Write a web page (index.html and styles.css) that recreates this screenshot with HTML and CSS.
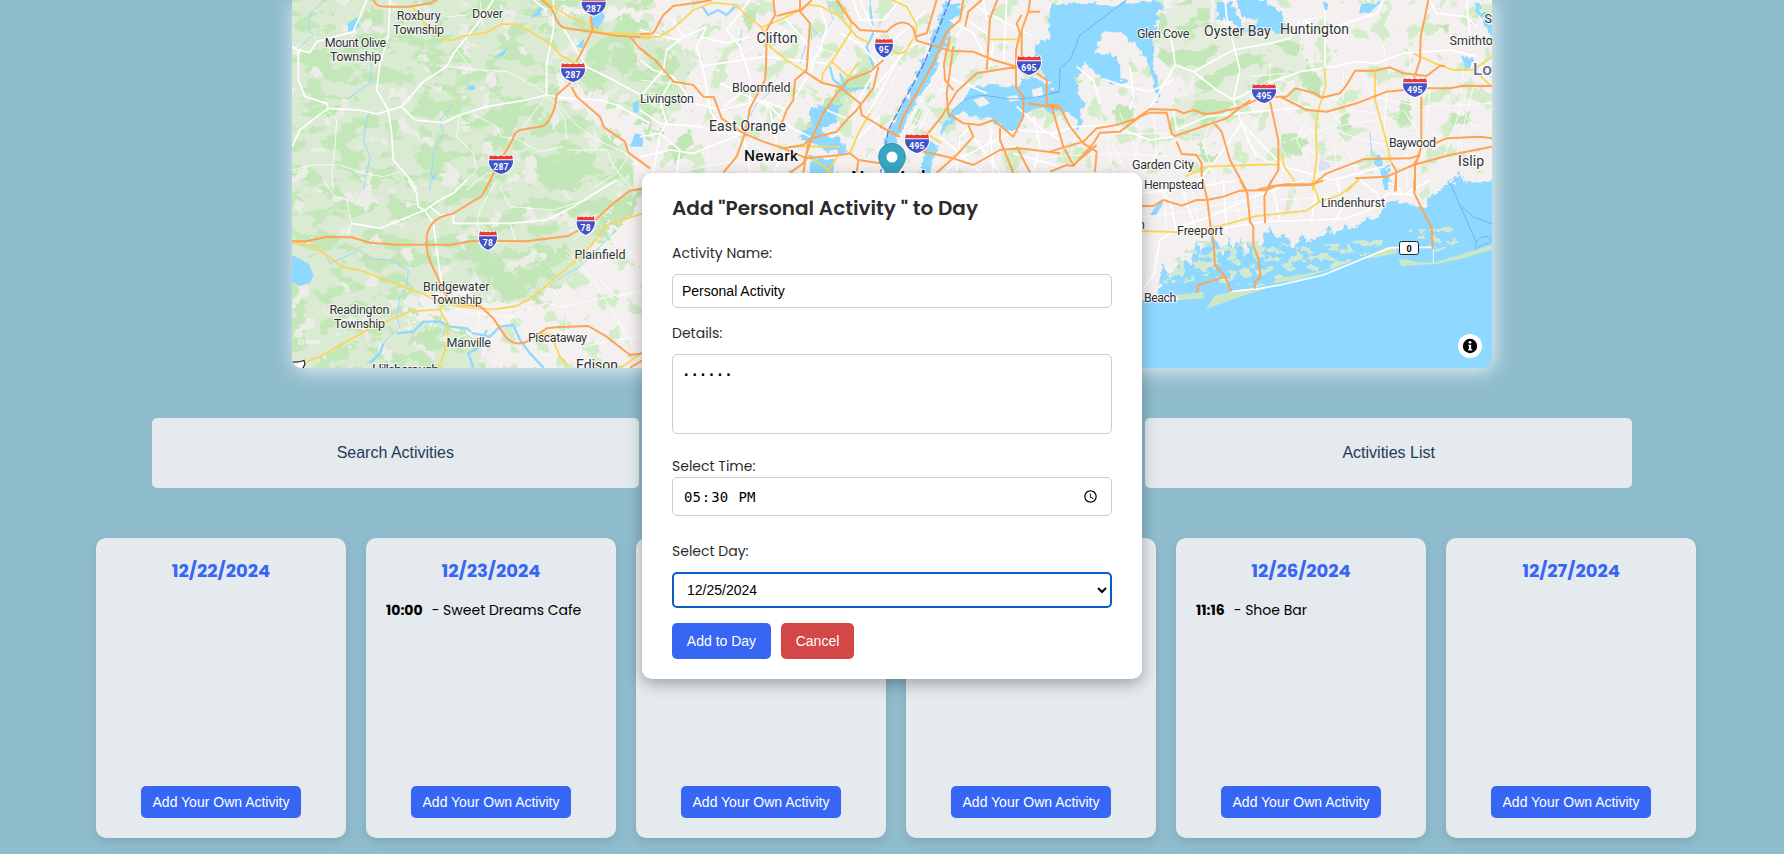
FILE: index.html
```html
<!DOCTYPE html>
<html lang="en">
<head>
<meta charset="utf-8">
<title>Trip Planner</title>
<link rel="stylesheet" href="styles.css">
</head>
<body>
<main class="page">
  <section class="map">
    <svg class="map-canvas" viewBox="292 0 1200 368" width="1200" height="368">
      <defs>
        <filter id="woods" x="0" y="0" width="1" height="1" color-interpolation-filters="sRGB">
          <feTurbulence type="fractalNoise" baseFrequency="0.012 0.02" numOctaves="5" seed="8"/>
          <feColorMatrix values="0 0 0 0 .765  0 0 0 0 .905  0 0 0 0 .72  22 0 0 0 -11.4"/>
          <feComposite in2="SourceAlpha" operator="in"/>
        </filter>
        <filter id="town" x="0" y="0" width="1" height="1" color-interpolation-filters="sRGB">
          <feTurbulence type="fractalNoise" baseFrequency="0.016" numOctaves="5" seed="31"/>
          <feColorMatrix values="0 0 0 0 .93  0 0 0 0 .93  0 0 0 0 .91  22 0 0 0 -14"/>
          <feComposite in2="SourceAlpha" operator="in"/>
        </filter>
        <filter id="parks" x="0" y="0" width="1" height="1" color-interpolation-filters="sRGB">
          <feTurbulence type="fractalNoise" baseFrequency="0.016" numOctaves="5" seed="5"/>
          <feColorMatrix values="0 0 0 0 .83  0 0 0 0 .925  0 0 0 0 .79  24 0 0 0 -14.6"/>
          <feComposite in2="SourceAlpha" operator="in"/>
        </filter>
        <filter id="marsh" x="0" y="0" width="1" height="1" color-interpolation-filters="sRGB">
          <feTurbulence type="fractalNoise" baseFrequency="0.03 0.045" numOctaves="3" seed="12"/>
          <feColorMatrix values="0 0 0 0 .82  0 0 0 0 .91  0 0 0 0 .82  30 0 0 0 -16"/>
          <feComposite in2="SourceAlpha" operator="in"/>
        </filter>
        <filter id="shore" x="-.05" y="-.05" width="1.1" height="1.1">
          <feTurbulence type="fractalNoise" baseFrequency="0.04" numOctaves="3" seed="3"/>
          <feDisplacementMap in="SourceGraphic" scale="34" xChannelSelector="R" yChannelSelector="G"/>
        </filter>
        <filter id="edge" x="-.1" y="-.1" width="1.2" height="1.2">
          <feTurbulence type="fractalNoise" baseFrequency="0.03" numOctaves="4" seed="9"/>
          <feDisplacementMap in="SourceGraphic" scale="90" xChannelSelector="R" yChannelSelector="G"/>
        </filter>
        <g id="shield3">
          <path fill="#fff" d="M-13-5 -11.5-10Q-6-7 0-9.500Q6-7 11.500-10L13-5C14 3 8 9 0 11C-8 9-14 3-13-5Z"/>
          <path fill="#ea3a38" d="M-12-4.800 -11-9Q-8.500-7.200-6-8.500Q-3-7 0-8.800Q3-7 6-8.500Q8.500-7.200 11-9L12-4.800Z"/>
          <path fill="#4153c6" d="M-12-3.700H12C12.600 3 7 8.500 0 10C-7 8.500-12.600 3-12-3.700Z"/>
        </g>
        <g id="shield2">
          <path fill="#fff" d="M-10-5-8.500-10Q-4-7 0-9.500Q4-7 8.500-10L10-5C11 3 6 9 0 11C-6 9-11 3-10-5Z"/>
          <path fill="#ea3a38" d="M-9-4.800-8-9Q-6-7.200-4-8.500Q-2-7 0-8.800Q2-7 4-8.500Q6-7.200 8-9L9-4.800Z"/>
          <path fill="#4153c6" d="M-9-3.700H9C9.600 3 5 8 0 10C-5 8-9.600 3-9-3.700Z"/>
        </g>
      </defs>
      <rect class="land" x="292" width="1200" height="368"/>

      <g transform="scale(.33333)">
        <path class="green" d="M870 0H1960L2000 90 2080 180 2190 230 2150 330 1970 420 1900 440V1110H870Z"/>
        <path filter="url(#woods)" d="M870 0H1960L2000 90 2130 210 2210 230 2150 330 1970 420 1900 440V1110H870Z"/>
        <path filter="url(#town)" d="M870 0H2100V1110H870Z"/>
        <path class="land" filter="url(#edge)" d="M1680 20H2600V520H1920L1870 430 1740 330 1660 300 1680 230 1850 330 1930 370 1960 430 2030 300 2090 170 1960 60 1700 50Z"/>
        <path class="land" filter="url(#edge)" d="M1230 950 1260 890 1400 880 1560 930 1700 850 1800 720 1930 600V1110H1500L1410 1000 1330 970 1200 960Z"/>
        <path filter="url(#parks)" d="M1930 0H4476V520H1930ZM1300 900 1930 700V1110H1300Z"/>
        <path class="greenlite" filter="url(#edge)" d="M3480 40 3560 0H3630V80L3720 90 3750 70 3840 60 3900 100 3940 230 3830 260 3690 320 3620 410 3510 400V340L3580 260 3470 170Z"/>
        <path filter="url(#woods)" d="M3480 40 3560 0H3630V80L3720 90 3750 70 3840 60 3900 100 3940 230 3830 260 3690 320 3620 410 3510 400V340L3580 260 3470 170Z"/>
      </g>

      <g transform="translate(280 0) scale(.33333)">
        <path class="wood" filter="url(#shore)" d="M755 455 820 480 950 450 935 510 880 570H800L770 510ZM1000 145 1065 130 1075 210 1030 230 990 190ZM540 380 700 300 730 330 690 410 650 380Z"/>
        <path class="water" d="M203 70 235 50 237 80 205 102ZM750 55 790 10 780 45ZM642 172 685 142 670 168ZM560 258 585 256 585 270H565ZM888 140 913 115 908 145ZM930 60 960 25 975 50 950 92ZM1058 310 1075 300 1076 340 1060 335ZM1050 440 1065 400 1090 405 1088 440ZM455 530 470 520 460 545Z"/>
        <path class="creek" d="M135 0 90 40 85 90 100 105 50 150M275 190 270 250 205 295M265 340 250 420 270 470 250 570M520 310 480 360 490 400 460 460 450 570"/>
        <path class="minor" d="M36 140 55 150 55 240 75 290 140 310 145 325 240 330 290 342 365 320 400 280 430 245 500 200 520 160 590 75 640 0M145 325 110 350 60 390 36 440M55 150 90 158 110 125 220 95 260 0M330 0 325 110 300 190 290 270 325 330 335 400 340 480 400 550 410 570M365 320 405 360 490 368 540 345 620 320 740 300 800 285M820 0 820 90 800 190 800 285 860 295 960 300 1010 315 1110 370M760 0 800 30M850 85 920 200 1000 240 1110 300"/>
        <path class="street" d="M470 195 600 210 680 215 770 260 800 285 720 395 690 415M540 345 530 410 580 460 590 510 530 570M36 510 100 495H180L250 520 310 530 360 515M135 325 170 360 165 440 155 520 160 570M575 340 650 380 665 410 705 415 780 455 850 440M800 290 850 330 890 375 950 420 1040 460 1080 500 1110 540M820 305 855 360 860 420M930 570 1010 520 1045 470M500 50 560 45 590 20M500 200 530 150 570 200M600 0 610 80M860 450 980 450 1000 500 1060 570M560 570 620 520 670 515"/>
      </g>
      <g transform="translate(280 180) scale(.33333)">
        <path class="wood" filter="url(#edge)" d="M520 195 600 190 640 220 700 280 790 240 850 200 870 210 790 300 720 350 650 350 640 300 590 270 560 230ZM930 150 1040 50 1080 20V60L960 180ZM390 470 440 440 490 450 470 480 420 500Z"/>
        <path class="water" d="M36 225 85 250 100 285 90 310 60 318 36 305Z"/>
        <path class="creek" d="M140 230 150 250 240 210 260 235 330 240 350 250 385 270 380 320 360 350 350 410 360 440 340 460 310 490 300 520 260 550M820 310 860 280 900 260 1010 150"/>
        <path class="river" d="M350 460 400 455 430 425 480 425 510 440 560 445 580 460 630 470 660 440 700 435 720 480 750 520 790 563M580 563 565 520 600 500 620 450M310 490 300 520 270 550"/>
        <path class="minor" d="M215 130 300 145 435 90 480 60 520 40 560 0M385 0 410 40 415 80 435 92 460 130 480 280 490 340M450 80 480 105 520 105V130L590 130M590 130 690 130 800 120 880 80 960 30 1010 0"/>
        <path class="street" d="M130 0 165 50 200 60 215 130 205 165M590 130 600 90 650 0M660 20 690 80 820 90 920 60M590 130 610 180M690 130 705 180 740 185M860 210 940 300 1000 400 1060 500M880 180 960 120M740 390 800 370 850 380 940 360 1086 330M500 380 580 400 700 410 740 450 760 500 820 530M820 330 860 390 860 470M960 300 1010 350 1060 340M700 410 640 440M910 500 1000 480 1086 470M600 400 590 450 520 480M1010 160 1086 260M930 260 1040 210"/>
      </g>

      <g transform="translate(640 0) scale(.33333)">
        <path class="wood" filter="url(#shore)" d="M60 185 110 160 120 200 70 260ZM90 440 150 390 165 420 110 500ZM500 370 560 300 640 220 700 190 690 250 600 300 540 390 520 450ZM310 50 350 20 340 80 320 100ZM560 10 600 0 625 30 600 50Z"/>
        <g class="water" filter="url(#shore)">
          <path d="M915 10 960 10 940 80 900 160 885 215 835 300 785 380 762 440 755 560H730L738 410 755 380 805 280 865 140ZM510 325 560 320 600 310 590 360 545 395 600 420 620 460 560 450 510 430 480 420 490 390 520 390ZM510 470 580 480 590 560H520ZM905 370 960 310 1000 265 1040 250 1110 265 1150 240 1200 240 1240 260 1300 240V345L1230 335 1190 320 1150 345 1130 400 1090 385 1060 350 1020 360 985 340 950 340 900 410ZM1300 10 1250 40 1240 80 1215 130 1180 120 1185 180 1220 230 1240 270 1300 300ZM860 420 890 430 860 560H835Z"/>
        </g>
        <path class="land" d="M1000 300 1030 290 1050 310 1020 322ZM1100 290 1130 285 1140 300 1110 305ZM1175 270 1205 260 1210 285 1180 295Z"/>
        <path class="wood" d="M815 370 835 325 850 330 830 375ZM850 310 865 285 875 292 862 315Z"/>
        <path class="river" d="M187 20 205 45 235 30 260 45 285 20M600 220 620 270 580 240 570 200M690 20 700 100 680 140 700 200M600 270 690 262"/>
        <path class="creek" d="M560 0 580 60 540 110 510 80 515 120M305 90 300 130M410 260 350 310 330 350M690 0 695 60M500 130 480 190"/>
        <path class="minor" d="M0 180 40 210 100 230 160 310 250 330 360 300 440 330M0 330 60 370 180 380 240 400 310 400M0 410 60 400 120 450 110 518M100 60 130 110 80 150 70 210 0 290M200 80 170 140 190 210 210 330 240 380M180 110 260 130 330 110M330 0 260 90 300 140 330 230 330 330M430 50 500 130 520 200 460 300M0 90 110 120 200 80M40 518 60 400 80 370 60 300 100 230M440 90 370 150M540 20 560 80 540 150 500 210M640 0 660 60 730 60 780 0M180 200 370 170 560 190M600 100 660 130 710 190M240 250 390 320 450 380 510 410M330 260 250 320M160 460 310 400 330 518M390 330 410 430M440 440 400 518M630 360 560 330M640 330 750 130 860 30M680 350 790 150 830 130M660 0 710 110M700 270 790 160M650 420 720 350M910 518 970 470 1050 430 1130 390 1260 400M950 518 960 410 990 380M1000 410 1080 518M1010 20 1100 70 1180 110M1040 100 980 60 950 110M1060 130 1050 200M930 60 1000 100 1040 180M920 230 1040 280M900 410 980 480 1020 518M1050 370 1060 518M1120 460 1260 500M1180 350 1200 440 1180 518M1130 320 1210 390 1260 420M1040 60 1030 0M1100 0 1090 200M0 470 90 450 160 460"/>
        <path class="street" d="M780 410 940 130M800 410 955 130M820 420 965 150M790 400 850 420M810 350 870 380M835 300 895 325M860 250 920 275M885 200 930 220M750 170 790 185 700 350 720 400M20 20 150 90M0 240 180 260M310 420 480 518M350 340 420 430 500 470M200 430 210 518M100 518 300 480M460 120 620 170M280 180 460 60M580 60 500 230M920 300 990 250M1140 410 1230 518M990 420 1260 460M1060 390 1020 518M1160 440 1250 360"/>
      </g>

      <g transform="translate(1050 0) scale(.33333)">
        <g class="water" filter="url(#shore)">
          <path d="M10 10H345L320 60 305 110 325 260 335 290 315 300 300 200 255 130 195 90 150 105 135 160 200 170 215 220 225 250 190 255 140 220 100 190 75 260 100 310 90 390 60 340 45 320 15 310V260L10 220 10 160 0 150V40ZM500 10H550L560 60 590 90 610 85 630 20 680 20 700 50 705 90 680 100 640 80 620 100 560 90 545 60 525 50 500 60ZM560 0H650V50L580 60ZM820 10H840L825 40ZM930 10 990 8 960 35 930 30ZM1270 10 1290 20 1320 60 1340 110 1310 100 1300 50ZM1235 170 1270 168 1260 205H1245Z"/>
          <path d="M1170 580 1200 540 1205 560 1230 520 1250 550 1300 560 1345 530V600H1170ZM995 510 1020 500 1018 570H1000ZM970 460 985 455 1000 500 985 510Z"/>
        </g>
        <path class="wood" filter="url(#shore)" d="M185 330 210 310 250 325 245 370 200 365ZM690 400 740 405 775 430 750 460 710 465ZM445 430 460 440 470 465 510 460V480L460 485ZM1050 310 1080 300V370L1045 375ZM755 230 800 220 820 260 800 290 760 260ZM870 350 900 345 900 390 870 400ZM1160 80 1200 70 1190 100ZM1200 345 1260 340 1260 370 1210 370ZM75 230 100 235 90 255ZM190 370 240 370 230 385Z"/>
        <path class="lilac" d="M805 500 815 465 845 500 810 515Z"/>
        <path class="creek" d="M960 395 965 460 1000 520 1005 570"/>
        <path class="ferry" d="M230 0 90 105 60 180 30 205 28 275 0 278"/>
        <path class="minor" d="M0 400 80 380 180 375 300 420 370 410M370 150 375 195 430 215 550 150 660 130 720 115 750 60M375 195 320 290 300 320M430 215 500 270 550 300 640 255 750 215 850 200 920 185 980 190 1060 160 1200 150 1280 170M550 300 575 370 600 430 620 470M525 0 530 50 555 150 570 210 550 300M825 30V205M1000 0 980 40 820 90 760 60M1140 0 1160 40 1250 50 1280 80M1250 0 1260 120M370 150 360 110 310 100M170 240 230 260 300 275M240 200 250 290 240 330M300 275 370 240M80 200 130 240 150 310M370 330 380 390 470 350 620 335M575 370 700 500 850 540 1000 500M575 370 490 490 430 560M620 335 780 320"/>
        <path class="street" d="M640 260 700 300 720 350 800 400M825 290 880 400 980 430 1100 440M850 430 870 560M930 210 970 290 1110 320M1110 320 1326 310M1240 210 1230 330 1180 480M1130 440 1090 520M720 420 850 380 1030 350M760 440 820 480 930 500M1200 280 1270 380 1326 360M250 330 270 420 240 518M150 340 180 420 230 518M60 420 200 400 370 400M100 440 150 518M480 360 460 430 500 560M620 470 700 500 690 560M750 160 760 60 820 50M1060 330 1120 420M880 210 880 300M1000 130 1010 210M1080 120V210M170 410 190 518M210 340 290 518M310 340 320 470M350 420 280 518M0 470 200 460 370 470M640 330 590 420 660 500M780 340 740 420 780 500M850 290 900 330 980 340M1140 270 1130 390 1200 440M880 420 940 560M800 520 950 490M1010 280 1000 420M1270 260 1220 460M660 190V300M600 230 700 220M1070 460V560"/>
      </g>

      <g transform="translate(1130 180) scale(.33333)">
        <path class="green" d="M480 20 500 30 480 90 460 110ZM865 45 895 15 900 40 880 60Z"/>
        <path class="water" filter="url(#shore)" d="M10 360 65 352 90 330 95 250 120 290 140 260 165 240 180 250 200 180 215 230 240 170 265 185 280 230 300 170 315 215 330 175 345 230 360 180 380 210 420 145 440 175 470 165 480 200 500 190 515 160 540 190 560 170 600 145 615 165 650 140 690 140 710 110 745 120 765 70 800 65 880 80 900 50 940 20 970 10 1150 5V590H0Z"/>
        <path class="ocean" d="M36 367 230 375 340 350 800 225 1086 250V563H36Z"/>
        <path filter="url(#marsh)" d="M100 270 200 180 300 190 400 180 530 200 700 180 770 180V200L600 270 430 310 380 320 280 310 200 300 160 310 100 310ZM830 150 960 140 1000 180 910 220 880 190Z"/>
        <path class="water" d="M60 105 90 60 100 70 75 110Z"/>
        <path class="sand" d="M228 388 255 345 380 325 420 322 330 350ZM430 310 440 295 540 280 620 262 500 300ZM690 238 770 202 800 205V220L740 232ZM805 240 825 238 870 248 915 247 1086 195V208L1000 235 920 252 815 258ZM140 345 220 335V355L150 360Z"/>
        <path class="land" d="M36 342 140 345 150 360H36Z"/>
        <path class="ferry" d="M980 0 962 12 1040 190M995 80 1030 110 1086 132M1040 210C1030 180 1060 160 1080 175C1100 190 1050 190 1045 205"/>
        <path class="minor" d="M36 330 70 290 90 180 150 140 240 110 370 50 520 0M60 0 120 60 140 155M150 0 170 70 200 150M36 40 200 20 330 0M280 0 290 160M250 150 400 125 560 120 650 115 740 80 770 40 850 45M430 30 450 120M560 20 545 120M620 0 640 80 610 130M690 0 740 40 760 80M790 10 820 45 900 0M300 335 390 325 450 315 580 285 780 203 905 202"/>
        <path class="street" d="M910 205V250M36 110 140 100 340 60M100 20 110 150M180 0 210 150M310 20 330 130M380 20 370 110M450 60 600 50M480 20 520 120M240 100 400 80"/>
      </g>

      <g class="highways">
        <g transform="translate(280 0) scale(.33333)">
          <path class="yellow" d="M395 18 430 65 470 105Q500 125 520 120L545 110 620 97 665 72 715 74 810 130 840 165 890 190M790 0 860 45 930 80 970 98 1110 104"/>
          <path class="orange" d="M278-5C290 22 300 20 330 20H385L450 10 470-2M780-5 815 25 830 60Q840 82 860 85L935 95 1010 107 1110 113M945-5 932 50 938 90 890 185M872 248 830 285 825 320Q810 365 790 378L720 390Q700 400 700 415L680 450 660 480 615 572M875 262 890 290 960 350 972 382 1035 425 1045 458 1110 505M1050 110 1075 140 1110 170"/>
        </g>
        <g transform="translate(280 180) scale(.33333)">
          <path class="yellow" d="M36 188 100 198 190 262 240 270 380 325 430 342 480 365 540 380 640 388 710 378 760 350 860 265 930 200 980 135 1020 122 1090 100M80 545 120 530 190 490 280 440 390 395 480 388 490 370M480 390 505 435 500 500 475 563M780 460 820 465 825 495 840 530 865 560M1020 565 1090 515"/>
          <path class="orange" d="M36 184 80 184 140 170 215 172 270 188 350 194 515 194 570 184 620 182 740 184 865 168 940 125 1000 70 1050 32 1090 25M634-4 605 48 515 103Q455 110 440 165V205Q445 240 470 285L490 335 520 370 600 378 640 415 680 475Q710 500 740 485L800 445 830 442 925 438 980 470 1050 525 1090 520M1050 563 1090 540"/>
        </g>
        <g transform="translate(640 0) scale(.33333)">
          <path class="yellow" d="M0 113 60 110 100 85 160 30 215 8 285 14 330 55 365 82 430 55 470 35 500 14 540 18 600 50 650 110 690 130M365 82 390 140 440 180 495 215M610 20 632 60V95L575 185 548 220 546 245M575 185 625 230M655 187 625 230M755 150Q780 170 800 150L820 115M755 0 800 20 830 75 825 110M1050 118H1140M690 340 655 400 630 460M560 518 595 465M450 440 600 440M850 395 905 430M500 470 540 490 575 518"/>
          <path class="orange" d="M0 103 40 100 70 45 100 18 170 8 215 0M0 145 45 180 75 215 100 245 160 255 190 290 222 292 245 355 310 400 370 425 430 445 490 435 515 415 590 395 620 360 650 330 700 265 715 200M400 0 405 45 380 90 378 200 375 240 330 325 315 400 290 470 250 518M480 0 480 30 410 48M515 0 480 35 510 70 500 210 465 240 460 300 440 330 425 370M495 215 545 248 600 262 660 310 665 345 775 410M730 180 690 215 625 240 590 280 550 340 515 415 490 490 450 518M430 445 500 475 600 465 630 460 655 480 720 490M655 480 650 518M590 0 630 60 660 90 740 95 750 85Q790 50 820 85L830 122 930 152 1000 155 1060 180 1130 200 1010 220 950 275 905 350 860 405M890 0 860 100 825 110M970 0 960 60 920 95 880 190 790 350 775 390M930 110 912 190 915 240 940 270M940 140 920 280 925 340 970 370 1020 375 1060 360 1120 410 1150 350 1150 290 1128 260 1128 150 1140 100 1130 70 1145 45M1025 0 985 35 975 80M1072 0 1050 55 1040 210M1170 0 1165 35 1145 90 1145 190M1190 220 1220 240V310L1260 325M1165 310 1260 325M985 375 1000 410 950 465 890 518M830 450 940 475 1000 495 1080 450 1140 445 1260 460M1080 385 1080 420 1120 518M1130 440 1170 518M1165 35H1200M720 380 780 410M505 430 490 518"/>
          <path class="boundary" d="M930 0 890 100 850 195 745 390 722 518"/>
          <path class="tunnel" d="M925 350Q980 270 1060 290T1260 275"/>
        </g>
        <g transform="translate(1050 0) scale(.33333)">
          <path class="yellow" d="M823 202 827 260 805 330 798 380 800 470 788 572M975 215V300L1000 390 1025 490M1090 160 1150 188 1210 210H1270L1326 170M1270 210 1326 260M405 530 470 500 600 495 690 493M697 460 700 495 735 545M890 575 930 535"/>
          <path class="orange" d="M0 455 100 425 140 385 200 375 260 355 300 327 380 330 400 340 430 330 465 342 500 338 570 322 640 290 710 290 735 265 790 278 815 293 870 280 890 255 915 212 975 212 1020 202 1060 220 1130 228 1170 197 1185 198M0 515 50 495 70 498 130 430 150 398 210 395 270 350 300 338H350L365 400 375 408 470 375 530 355 600 300M650 248V262M690 290 770 330 830 335 920 310 1010 275 1110 265 1200 265 1240 257 1326 258M660 305 685 420V510L655 560 710 553H790L830 520 940 478 1080 475 1110 465M1150 432 1190 415 1290 410 1326 415M490 367 515 395 540 480 590 572M380 425 395 462 440 465 455 490V530M0 315Q30 310 40 340L60 380 100 430 140 455 135 515M5 320 40 440 70 495 140 435M1135 0 1125 50 1112 110 1110 180 1092 235M1114 290V440L1095 500V572M1110 465 1090 495 1200 465 1326 440M1025 490 1038 510V572M620 570 660 560M915 535 1010 530 1090 495"/>
        </g>
        <g transform="translate(1130 180) scale(.33333)">
          <path class="yellow" d="M36 153 140 156 250 143 380 108 530 92 568 65 630 45 685 0M568 65 550 10 545 0"/>
          <path class="orange" d="M36 78 70 78 100 60 155 77 200 60H230L280 50 330 32 410 30 440 17 540 15 580 2M218 0 232 60 243 150 250 180 255 255 285 290 305 335M285 290 205 315 200 338M330 0 352 40 360 125 370 140V195L385 235 392 290 375 305V326M425 0 403 50 405 130M797 0 795 35M853 0V40L905 145 908 207"/>
        </g>
      </g>

      <g class="labels">
        <text x="396.700" y="19.500" textLength="44">Roxbury</text><text x="393" y="33.500" textLength="51">Township</text>
        <text x="472" y="17.500" textLength="31">Dover</text>
        <text x="324.700" y="47" textLength="61.500">Mount Olive</text><text x="330" y="61" textLength="51">Township</text>
        <text x="640" y="102.500" textLength="54">Livingston</text>
        <text x="574.500" y="258.500" textLength="51">Plainfield</text>
        <text x="423" y="290.500" textLength="66.500">Bridgewater</text><text x="431" y="304" textLength="51">Township</text>
        <text x="329.500" y="314" textLength="60">Readington</text><text x="334" y="328" textLength="51">Township</text>
        <text x="446.500" y="347" textLength="44.500">Manville</text>
        <text x="528" y="342" textLength="59">Piscataway</text>
        <text class="mid" x="372" y="375" textLength="67">Hillsborough</text>
        <text class="mid" x="576" y="370" textLength="42">Edison</text>
        <text class="mid" x="756.500" y="43" textLength="41">Clifton</text>
        <text x="732" y="92" textLength="58.500">Bloomfield</text>
        <text class="mid" x="709" y="130.500" textLength="77">East Orange</text>
        <text class="big" x="744" y="161" textLength="54">Newark</text>
        <text class="huge" x="851" y="184" textLength="80">New York</text>
        <text x="1137" y="38" textLength="52.500">Glen Cove</text>
        <text class="mid" x="1204" y="35.500" textLength="66.500">Oyster Bay</text>
        <text class="mid" x="1280" y="33.500" textLength="69">Huntington</text>
        <text x="1484.500" y="22.500">St. James</text>
        <text x="1449.500" y="45">Smithtown</text>
        <text class="region" x="1473" y="75">Long Island</text>
        <text x="1389" y="146.500" textLength="47">Baywood</text>
        <text class="mid" x="1458" y="166" textLength="26">Islip</text>
        <text x="1132" y="169" textLength="62">Garden City</text>
        <text x="1144" y="188.500" textLength="60">Hempstead</text>
        <text x="1321" y="207" textLength="64">Lindenhurst</text>
        <text x="1177" y="235" textLength="46">Freeport</text>
        <text x="1113" y="229" textLength="32">Lawn</text>
        <text x="1144" y="301.500" textLength="32.500">Beach</text>
      </g>
      <g class="shield-text">
        <use href="#shield3" x="593.700" y="5.500"/><text x="593.700" y="12">287</text>
        <use href="#shield3" x="573" y="72"/><text x="573" y="77.500">287</text>
        <use href="#shield3" x="501" y="164"/><text x="501" y="169.500">287</text>
        <use href="#shield2" x="488" y="240"/><text x="488" y="245.500">78</text>
        <use href="#shield2" x="585.700" y="225"/><text x="585.700" y="230.500">78</text>
        <use href="#shield2" x="884" y="47.500"/><text x="884" y="52.500">95</text>
        <use href="#shield3" x="1029" y="65"/><text x="1029" y="70.500">695</text>
        <use href="#shield3" x="917" y="143"/><text x="917" y="148.500">495</text>
        <use href="#shield3" x="1264" y="93"/><text x="1264" y="98.500">495</text>
        <use href="#shield3" x="1415" y="87"/><text x="1415" y="92.500">495</text>
      </g>
      <rect x="1399.500" y="241.500" width="19" height="13" rx="2" fill="#fff" stroke="#23272f"/>
      <text class="route" x="1409" y="251.500">0</text>
      <path d="M290 361.500Q297 363 304 360.500L305 364 302 370H290" fill="#fff" stroke="#222" stroke-width="1.200"/>
      <g fill="none" stroke="#fff" opacity=".85"><circle cx="301" cy="342" r="2.300"/><path d="M305 342H320" stroke-width="3"/><path d="M305 342H320" stroke="#ccc" stroke-dasharray="1.500 1"/></g>
      <path d="M892 143.500C899.500 143.500 905.300 149.500 905.300 157C905.300 166 897 171 892 182C887 171 878.700 166 878.700 157C878.700 149.500 884.500 143.500 892 143.500Z" fill="#38a5c2" stroke="#348fa8"/>
      <circle cx="892" cy="157" r="5.500" fill="#fff"/>
      <circle cx="1470" cy="346" r="12" fill="#fff"/><circle cx="1470" cy="346" r="7.200"/>
      <path d="M1468.300 344.700H1471.200V349.300H1472.200V350.500H1468V349.300H1469V345.900H1468.300Z" fill="#fff"/><circle cx="1470" cy="342.300" r="1.400" fill="#fff"/>
    </svg>
  </section>

  <nav class="tabs">
    <button class="tab">Search Activities</button>
    <button class="tab">Saved Activities</button>
    <button class="tab">Activities List</button>
  </nav>

  <section class="days">
    <article class="day"><h3>12/22/2024</h3><button class="btn add">Add Your Own Activity</button></article>
    <article class="day"><h3>12/23/2024</h3><p class="entry"><b>10:00</b><span>- Sweet Dreams Cafe</span></p><button class="btn add">Add Your Own Activity</button></article>
    <article class="day"><h3>12/24/2024</h3><button class="btn add">Add Your Own Activity</button></article>
    <article class="day"><h3>12/25/2024</h3><button class="btn add">Add Your Own Activity</button></article>
    <article class="day"><h3>12/26/2024</h3><p class="entry"><b>11:16</b><span>- Shoe Bar</span></p><button class="btn add">Add Your Own Activity</button></article>
    <article class="day"><h3>12/27/2024</h3><button class="btn add">Add Your Own Activity</button></article>
  </section>
</main>

<form class="modal">
  <h2>Add "Personal Activity " to Day</h2>
  <label class="l-name" for="name">Activity Name:</label>
  <input class="field name" id="name" type="text" value="Personal Activity">
  <label class="l-details" for="details">Details:</label>
  <textarea class="field details" id="details">......</textarea>
  <label class="l-time" for="time">Select Time:</label>
  <input class="field time" id="time" type="time" value="17:30">
  <label class="l-day" for="day">Select Day:</label>
  <select class="field select" id="day"><option>12/25/2024</option></select>
  <div class="actions">
    <button type="button" class="btn save">Add to Day</button>
    <button type="button" class="btn cancel">Cancel</button>
  </div>
</form>
</body>
</html>
```

FILE: styles.css
```css
* { box-sizing: border-box; }
body {
  margin: 0;
  height: 854px;
  overflow: hidden;
  background: #8fbccc;
  font-family: Poppins, Inter, "Liberation Sans", sans-serif;
  color: #000;
}
button, input, select { font-family: Arial, "Liberation Sans", sans-serif; }

.map {
  width: 1200px;
  height: 368px;
  margin: 0 auto;
  border-radius: 0 0 10px 10px;
  box-shadow: 2px 2px 20px rgba(255, 255, 255, .85);
}
.map-canvas { display: block; border-radius: 0 0 10px 10px; }

.land { fill: #f3f0ef; }
.green { fill: #daead3; }
.greenlite { fill: #e4eddd; }
.wood { fill: #c3e6b8; }
.sand { fill: #cbe8c2; }
.water, .ocean { fill: #8fd8ff; }
.lilac { fill: #dfe0f0; }
.creek, .river, .minor, .street, .yellow, .orange, .ferry, .boundary, .tunnel { fill: none; stroke-linejoin: round; }
.creek { stroke: #9bd9f5; stroke-width: 3; }
.river { stroke: #8fd8ff; stroke-width: 7; }
.minor { stroke: #fff; stroke-width: 5; }
.street { stroke: #fff; stroke-width: 3; opacity: .8; }
.yellow { stroke: #f8d75c; stroke-width: 5.500; }
.orange { stroke: #ffa355; stroke-width: 6; }
.ferry { stroke: #6bb2f5; stroke-width: 3; }
.boundary { stroke: #6e76d8; stroke-width: 4; stroke-dasharray: 22 7; }
.tunnel { stroke: #6bb8f0; stroke-width: 3; }

.labels text {
  font: 400 12.500px Roboto, sans-serif;
  fill: #303236;
  stroke: rgba(255, 255, 255, .75);
  stroke-width: 2px;
  paint-order: stroke;
}
.labels .mid { font-size: 14px; }
.labels .big { font-size: 15.500px; font-weight: 500; fill: #111; }
.labels .huge { font-size: 19px; font-weight: 500; fill: #000; }
.labels .region { font-size: 17px; font-weight: 500; fill: #5d7190; }
.shield-text text { font: 700 8.500px Roboto, sans-serif; fill: #fff; text-anchor: middle; letter-spacing: .3px; }
.route { font: 700 9px Roboto, sans-serif; text-anchor: middle; }

.tabs {
  display: grid;
  grid-template-columns: repeat(3, 1fr);
  gap: 10px;
  width: 1480px;
  height: 70px;
  margin: 50px auto;
}
.tab {
  border: 0;
  border-radius: 5px;
  background: #e5eaee;
  color: #1f3a57;
  font-size: 16px;
}

.days { display: flex; gap: 20px; margin-left: 96px; width: 1600px; }
.day {
  display: flex;
  flex-direction: column;
  width: 250px;
  height: 300px;
  padding: 19px 20px 20px;
  border-radius: 10px;
  background: #e5eaee;
  box-shadow: 0 4px 8px rgba(0, 0, 0, .1);
}
.day h3 {
  margin: 0;
  color: #3866f4;
  font-size: 18px;
  line-height: 28px;
  font-weight: 700;
  text-align: center;
}
.entry { display: flex; gap: 9px; margin: 15px 0 0; font-size: 14px; line-height: 21px; white-space: nowrap; }
.btn {
  border: 0;
  border-radius: 5px;
  background: #3866f4;
  color: #fff;
  font-size: 14px;
}
.add { align-self: center; width: 160px; height: 32px; margin-top: auto; padding: 0; }

.modal {
  position: absolute;
  left: 642px;
  top: 173px;
  display: flex;
  flex-direction: column;
  width: 500px;
  height: 506px;
  padding: 20px 30px;
  border-radius: 10px;
  background: #fff;
  box-shadow: 0 5px 15px rgba(0, 0, 0, .3);
  color: #2b2b2b;
}
.modal h2 { margin: 0; font-size: 20px; line-height: 30px; font-weight: 600; white-space: nowrap; }
.modal label { height: 21px; font-size: 14px; line-height: 21px; }
.l-name { margin-top: 20px; }
.l-details { margin-top: 15px; }
.l-time { margin-top: 22px; }
.l-day { margin-top: 25px; }
.field {
  flex: none;
  width: 440px;
  margin: 0;
  padding: 0 10px;
  border: 1px solid #ccc;
  border-radius: 5px;
  background: #fff;
  color: #000;
  font-size: 14px;
}
.name { height: 34px; margin-top: 10px; padding-left: 9px; }
.details { height: 80px; margin-top: 10px; padding: 8px 9px; resize: none; font-family: "DejaVu Sans Mono", monospace; font-weight: 700; }
.time { height: 39px; font-family: "DejaVu Sans Mono", monospace; }
.select { height: 36px; margin-top: 10px; padding: 0 0 0 9px; border: 2px solid #0a5bcb; }
.actions { display: flex; gap: 10px; margin-top: 15px; height: 36px; }
.save { width: 99px; }
.cancel { width: 73px; background: #d34846; }
```
